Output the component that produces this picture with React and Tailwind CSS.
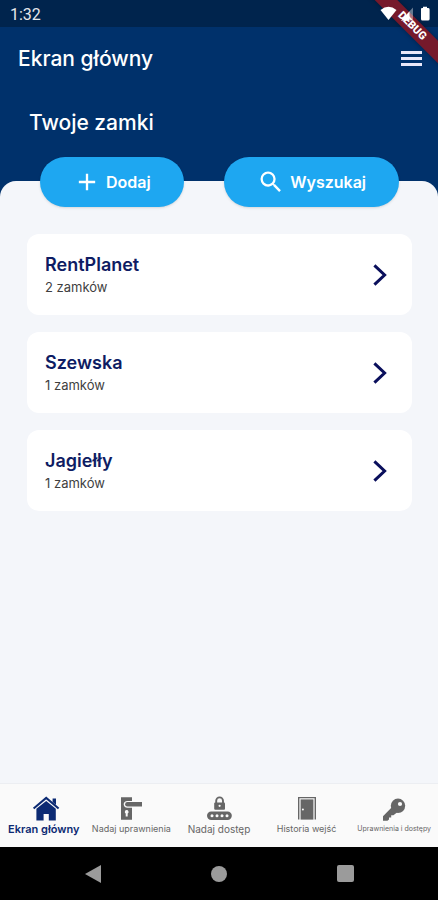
import { useState } from 'react';
import { MdAdd, MdSearch } from 'react-icons/md';

const locks = [
  { id: 1, name: 'RentPlanet', count: 2 },
  { id: 2, name: 'Szewska', count: 1 },
  { id: 3, name: 'Jagiełły', count: 1 },
];

const tabs = [
  { id: 'home', label: 'Ekran główny', Icon: HomeIcon, size: 'text-[11px]' },
  { id: 'grant', label: 'Nadaj uprawnienia', Icon: HandleIcon, size: 'text-[9px]' },
  { id: 'access', label: 'Nadaj dostęp', Icon: PadlockIcon, size: 'text-[10px]' },
  { id: 'history', label: 'Historia wejść', Icon: DoorIcon, size: 'text-[9px]' },
  { id: 'keys', label: 'Uprawnienia i dostępy', Icon: KeyIcon, size: 'text-[7px]' },
];

function HomeIcon() {
  return (
    <svg className="h-[25px] w-8" viewBox="-4 0 32 25" fill="currentColor" aria-hidden="true">
      <path d="M20.6 2.4h3.4v6.6l-3.4-3z" />
      <path d="M1.6 12.6L14.2 1.9L26.6 12.6" fill="none" stroke="currentColor" strokeWidth="2" />
      <path d="M4.4 12.8L14.2 4.9L23.8 12.8V24.4H16.8V18H11.6V24.4H4.4Z" />
    </svg>
  );
}

function HandleIcon() {
  return (
    <svg className="h-[25px] w-7" viewBox="0 0 28 25" fill="currentColor" aria-hidden="true">
      <path
        fillRule="evenodd"
        d="M4 1.2H15V4.9H10.5C8 4.9 6.7 6.4 6.7 8.3S8 11.7 10.5 11.7H15V23.8H4ZM9.7 14A1.9 1.9 0 0 0 8.7 17.5V20.4H10.7V17.5A1.9 1.9 0 0 0 9.7 14Z"
      />
      <path d="M10.4 6H25V10.6H10.4A2.3 2.3 0 0 1 10.4 6Z" />
    </svg>
  );
}

function PadlockIcon() {
  return (
    <svg className="h-[25px] w-7" viewBox="0 0 28 25" fill="currentColor" aria-hidden="true">
      <path d="M11.2 7V4.8A3.4 3.4 0 0 1 18 4.8V7" fill="none" stroke="currentColor" strokeWidth="1.9" />
      <rect x="9.2" y="6.4" width="10.8" height="7.4" rx="1" />
      <circle cx="14.6" cy="9.8" r="1.1" fill="#fafafa" />
      <rect x="2" y="15.6" width="24.8" height="8.4" rx="4.2" />
      <g fill="#fafafa">
        <circle cx="7" cy="19.8" r="1.5" />
        <circle cx="12" cy="19.8" r="1.5" />
        <circle cx="17" cy="19.8" r="1.5" />
        <circle cx="22" cy="19.8" r="1.5" />
      </g>
    </svg>
  );
}

function DoorIcon() {
  return (
    <svg className="h-[25px] w-7" viewBox="0 0 28 25" fill="currentColor" aria-hidden="true">
      <path d="M5.7 23.6V1.6H22.3V23.6" fill="none" stroke="currentColor" strokeWidth="1.4" />
      <rect x="7.6" y="3.4" width="12.8" height="20.2" />
      <circle cx="9.9" cy="13.4" r="1" fill="#fafafa" />
    </svg>
  );
}

function KeyIcon() {
  return (
    <svg className="h-[25px] w-7" viewBox="0 0 28 25" fill="currentColor" aria-hidden="true">
      <circle cx="18" cy="9.8" r="7.2" />
      <path d="M11.6 11.4L3 20.2V24.8H7.4L9 23.4V21.4H11.2V19.2H13.4L17 16.4Z" />
      <circle cx="20" cy="8" r="2.1" fill="#fafafa" />
    </svg>
  );
}

function StatusBar() {
  return (
    <div className="relative bg-[#00244d] h-[27px] pl-2.5 pr-2 flex items-center justify-between text-white">
      <span className="font-[Roboto] text-base leading-5 text-gray-200 pt-0.5">1:32</span>
      <div className="absolute -right-8 top-[18px] z-10 flex h-4 w-[116px] rotate-45 items-center justify-center bg-[#76192b] font-[Roboto] text-[11px] font-black leading-4 shadow-[0_0_5px_rgba(0,0,0,0.3)]">
        DEBUG
      </div>
      <svg className="relative z-20 h-4 w-[50px]" viewBox="0 0 50 16" fill="currentColor" aria-hidden="true">
        <path d="M0.5 4Q8.5 -2.4 16.5 4L8.5 14Z" />
        <path d="M33 1.5V14.5H21Z" fillOpacity="0.4" />
        <path d="M29.5 5.4V14.5H21Z" />
        <path d="M41 3Q41 2 42 2H43V0.8H47V2H48Q49.6 2 49.6 3.4V13Q49.6 14.6 48 14.6H42.4Q41 14.6 41 13Z" />
      </svg>
    </div>
  );
}

function LockCard({ name, count }) {
  return (
    <a
      href={`#${name}`}
      className="flex h-[81px] items-center justify-between rounded-xl bg-white pl-[18px] pr-6"
    >
      <div>
        <h3 className="text-lg font-semibold leading-6 text-[#0e1c63]">{name}</h3>
        <p className="text-[13px] leading-5 text-[#3f3f3f]">{count} zamków</p>
      </div>
      <svg className="h-6 w-4" viewBox="0 0 16 24" fill="none" stroke="#0a0f5c" strokeWidth="3" aria-hidden="true">
        <path d="M2.4 2.4L12.6 12L2.4 21.6" />
      </svg>
    </a>
  );
}

export default function App() {
  const [activeTab, setActiveTab] = useState('home');

  return (
    <div className="relative flex min-h-screen flex-col overflow-hidden bg-[#00316b] font-[Inter,sans-serif]">
      <StatusBar />
      <header className="text-white">
        <div className="flex h-16 items-center justify-between pl-[18px] pr-3">
          <h1 className="text-[21px] font-medium leading-7">Ekran główny</h1>
          <button type="button" aria-label="Menu" className="cursor-pointer">
            <svg className="h-7 w-7" viewBox="0 0 28 28" fill="#e9e8fa" aria-hidden="true">
              <path d="M3 6h21v3H3zM3 12h21v3H3zM3 18h21v3H3z" />
            </svg>
          </button>
        </div>
        <h2 className="mt-4 mb-[42px] pl-[29px] text-[21px] font-medium leading-8">Twoje zamki</h2>
      </header>

      <main className="grow rounded-t-2xl bg-[#f4f6fa]">
        <div className="-mt-6 flex justify-between pl-10 pr-[39px] text-white">
          <button
            type="button"
            className="flex h-[50px] cursor-pointer items-center gap-[5px] rounded-full bg-[#1ea7f1] px-[33px] text-base font-semibold shadow-sm"
          >
            <MdAdd className="h-7 w-7" />
            Dodaj
          </button>
          <button
            type="button"
            className="flex h-[50px] cursor-pointer items-center gap-[5px] rounded-full bg-[#1ea7f1] px-[33px] text-base font-semibold shadow-sm"
          >
            <MdSearch className="h-7 w-7" />
            Wyszukaj
          </button>
        </div>
        <div className="mt-[27px] flex flex-col gap-[17px] pl-[27px] pr-[26px]">
          {locks.map((lock) => (
            <LockCard key={lock.id} name={lock.name} count={lock.count} />
          ))}
        </div>
      </main>

      <nav className="grid h-16 grid-cols-5 border-t border-[#eceef2] bg-[#fafafa]">
        {tabs.map(({ id, label, Icon, size }) => (
          <button
            key={id}
            type="button"
            onClick={() => setActiveTab(id)}
            className={`flex cursor-pointer flex-col items-center pt-3 ${
              id === activeTab ? 'font-semibold text-[#0c2a73]' : 'text-[#666666]'
            }`}
          >
            <Icon />
            <span className={`${size} whitespace-nowrap leading-4`}>{label}</span>
          </button>
        ))}
      </nav>

      <div className="grid h-[53px] grid-cols-3 place-items-center bg-black px-[30px] text-[#9b9b9b]">
        <button type="button" aria-label="Wstecz">
          <svg className="h-[18px] w-4" viewBox="0 0 16 18" fill="currentColor" aria-hidden="true">
            <path d="M16 0V18L0 9Z" />
          </svg>
        </button>
        <button type="button" aria-label="Start" className="h-4 w-4 rounded-full bg-[#9b9b9b]" />
        <button type="button" aria-label="Ostatnie" className="h-[17px] w-[17px] rounded-xs bg-[#9b9b9b]" />
      </div>
    </div>
  );
}
